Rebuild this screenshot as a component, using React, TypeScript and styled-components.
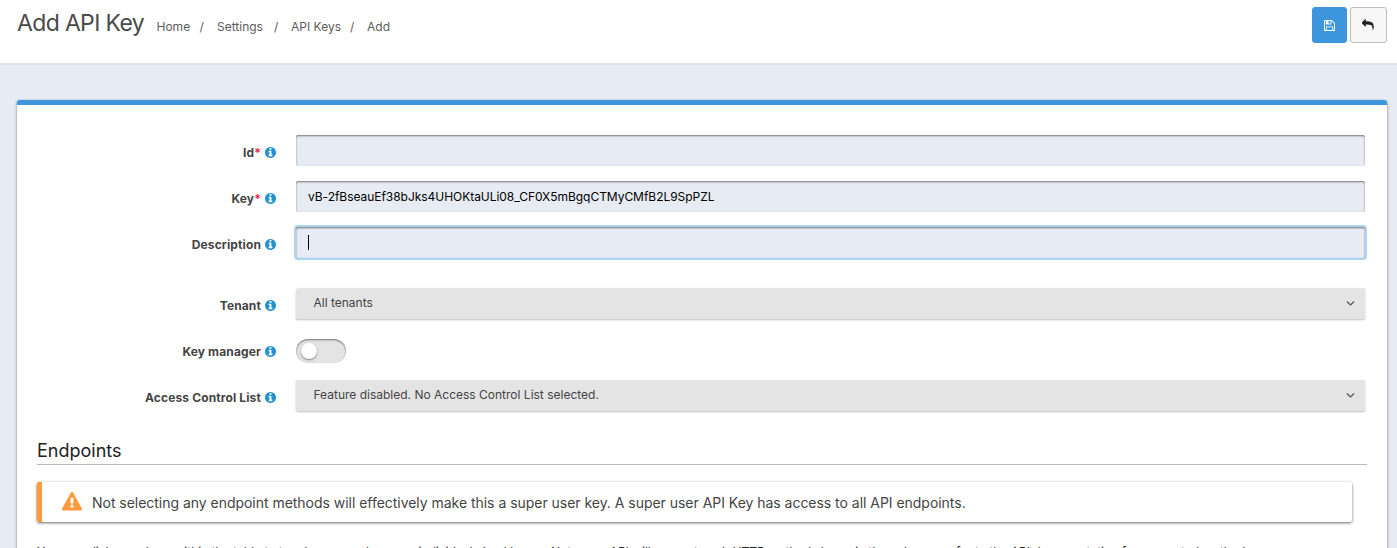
import React from "react";
import styled, { createGlobalStyle } from "styled-components";

const Global = createGlobalStyle`
  * { box-sizing: border-box; }
  html, body { margin: 0; height: 548px; overflow: hidden; background: #e7ebf3; }
  body { font-family: Inter, "Liberation Sans", sans-serif; color: #444; font-size: 12px; }
`;

const Page = styled.div`
  height: 548px;
  overflow: hidden;
`;

const Header = styled.header`
  display: flex;
  align-items: flex-start;
  height: 63px;
  padding: 7px 10px 0 17px;
  background: #fff;
  box-shadow: 0 1px 1px 1px #e1e3e6;
`;

const Title = styled.h1`
  margin: 0;
  width: 139.5px;
  font-size: 23px;
  font-weight: 400;
  line-height: 32px;
  letter-spacing: -0.65px;
  white-space: nowrap;
  color: #4a4a4a;
`;

const Crumbs = styled.nav`
  display: flex;
  flex: 1;
  padding-top: 10px;
  line-height: 20px;
  color: #5c5c5c;
`;

const Crumb = styled.span<{ $w: number }>`
  width: ${(p) => p.$w}px;
  white-space: nowrap;
`;

const IconButton = styled.button<{ $primary?: boolean }>`
  display: flex;
  align-items: center;
  justify-content: center;
  width: ${(p) => (p.$primary ? 35 : 37)}px;
  height: 36px;
  margin-left: 3px;
  padding: 0 1px 0 0;
  border-radius: 3px;
  border: 1px solid ${(p) => (p.$primary ? "#3d96dd" : "#bdbdbd")};
  background: ${(p) => (p.$primary ? "#3d96dd" : "#f7f7f7")};
  color: ${(p) => (p.$primary ? "#fff" : "#222")};
`;

const Panel = styled.main`
  margin: 37px 10px 0 17px;
  height: 470px;
  padding: 30px 20px 0;
  background: #fff;
  border-top: 5px solid #3d96dd;
  border-radius: 3px 3px 0 0;
  box-shadow: 0 1px 3px rgba(0, 0, 0, 0.5);
`;

const Row = styled.div<{ $gap?: number }>`
  display: flex;
  height: 31px;
  margin-bottom: ${(p) => p.$gap ?? 15}px;
  padding-right: 2px;
`;

const Label = styled.label`
  display: flex;
  justify-content: flex-end;
  align-items: center;
  width: 239px;
  margin-right: 20px;
  padding-top: 3px;
  font-weight: 700;
  letter-spacing: 0.13px;
  white-space: nowrap;
  svg { margin-left: 4px; color: #2490d0; }
`;

const Star = styled.span`
  color: #f0254c;
`;

const Input = styled.div<{ $focus?: boolean }>`
  display: flex;
  align-items: center;
  flex: 1;
  height: 31px;
  padding: 0 12px;
  color: #000;
  letter-spacing: -0.04px;
  background: #e7ebf3;
  border-radius: 2px;
  box-shadow: inset 0 1px 2px rgba(0, 0, 0, 0.5)${(p) => (p.$focus ? ", 0 0 0 2px #acd4f1" : "")};
`;

const Caret = styled.span`
  width: 1px;
  height: 15px;
  background: #000;
`;

const Select = styled.div`
  display: flex;
  justify-content: space-between;
  align-items: center;
  flex: 1;
  height: 31px;
  padding: 0 10px 2px 17.5px;
  background: #e4e4e4;
  border-radius: 2px;
  box-shadow: 0 1px 2px rgba(0, 0, 0, 0.25);
  svg { margin-top: 2px; }
`;

const Toggle = styled.div`
  display: flex;
  align-items: center;
  width: 50px;
  height: 24px;
  margin-top: 5px;
  padding-left: 5px;
  border-radius: 12px;
  background: #e4e4e4;
  box-shadow: inset 0 1px 2px rgba(0, 0, 0, 0.5);
`;

const Knob = styled.span`
  width: 16px;
  height: 16px;
  border-radius: 50%;
  background: #fff;
  box-shadow: 0 1px 2px rgba(0, 0, 0, 0.45);
`;

const Section = styled.h2`
  margin: 26px 0 17px;
  height: 28px;
  border-bottom: 1px solid #b9b9b9;
  font-size: 18px;
  font-weight: 400;
  line-height: 28px;
  color: #222;
`;

const Alert = styled.div`
  display: flex;
  align-items: center;
  height: 40px;
  margin-right: 15px;
  padding-left: 20px;
  border-left: 5px solid #ff9a3c;
  border-radius: 2px;
  box-shadow: 0 1px 3px rgba(0, 0, 0, 0.6);
  font-size: 14px;
  letter-spacing: -0.03px;
  color: #444;
  svg { color: #ff9a3c; margin-right: 10px; }
`;

const Note = styled.p`
  margin: 20px 0 0;
  line-height: 20px;
  white-space: nowrap;
  color: #222;
`;

const Info = () => (
  <svg width="11" height="11" viewBox="128 128 1536 1536" fill="currentColor">
    <path d="M1152 1376v-160q0-14-9-23t-23-9h-96v-512q0-14-9-23t-23-9h-320q-14 0-23 9t-9 23v160q0 14 9 23t23 9h96v320h-96q-14 0-23 9t-9 23v160q0 14 9 23t23 9h448q14 0 23-9t9-23zm-128-896v-192q0-14-9-23t-23-9h-192q-14 0-23 9t-9 23v192q0 14 9 23t23 9h192q14 0 23-9t9-23zm640 416q0 209-103 385.5t-279.5 279.5-385.5 103-385.5-103-279.5-279.5-103-385.5 103-385.5 279.5-279.5 385.5-103 385.5 103 279.5 279.5 103 385.5z" />
  </svg>
);

const Save = () => (
  <svg width="11" height="11" viewBox="128 128 1536 1536" fill="currentColor">
    <path d="M512 1536h768v-384h-768v384zm896 0h128v-896q0-14-10-38.5t-20-34.5l-281-281q-10-10-34-20t-39-10v416q0 40-28 68t-68 28h-576q-40 0-68-28t-28-68v-416h-128v1280h128v-416q0-40 28-68t68-28h832q40 0 68 28t28 68v416zm-384-928v-320q0-13-9.5-22.5t-22.5-9.5h-192q-13 0-22.5 9.5t-9.5 22.5v320q0 13 9.5 22.5t22.5 9.5h192q13 0 22.5-9.5t9.5-22.5zm640 32v928q0 40-28 68t-68 28h-1344q-40 0-68-28t-28-68v-1344q0-40 28-68t68-28h928q40 0 88 20t76 48l280 280q28 28 48 76t20 88z" />
  </svg>
);

const Reply = () => (
  <svg width="12" height="12" viewBox="0 0 1792 1792" fill="currentColor">
    <path d="M1792 1120q0 166-127 451-3 7-10.5 24t-13.5 30-13 22q-12 17-28 17-15 0-23.5-10t-8.5-25q0-9 2.5-26.5t2.5-23.5q5-68 5-123 0-112-19.5-200.5t-54-153.5-90-113-118.5-78-149-47-170-24-192-7h-224v256q0 26-19 45t-45 19-45-19l-512-512q-19-19-19-45t19-45l512-512q19-19 45-19t45 19 19 45v256h224q713 0 875 403 53 134 53 333z" />
  </svg>
);

const Warning = () => (
  <svg width="20" height="20" viewBox="0 0 1792 1792" fill="currentColor">
    <path d="M1024 1375v-190q0-14-9.5-23.5t-22.5-9.5h-192q-13 0-22.5 9.5t-9.5 23.5v190q0 14 9.5 23.5t22.5 9.5h192q13 0 22.5-9.5t9.5-23.5zm-2-374l18-459q0-12-10-19-13-11-24-11h-220q-11 0-24 11-10 7-10 21l17 457q0 10 10 16.5t24 6.5h185q14 0 23.5-6.5t10.5-16.5zm-14-934l768 1408q35 63-2 126-17 29-46.5 46t-63.5 17h-1536q-34 0-63.5-17t-46.5-46q-37-63-2-126l768-1408q17-31 47-49t65-18 65 18 47 49z" />
  </svg>
);

const Chevron = () => (
  <svg width="9" height="7" viewBox="0 0 9 7" fill="none" stroke="#555" strokeWidth="1.2">
    <path d="M0.9 1.5L4.5 5L8.1 1.5" />
  </svg>
);

export default function App() {
  return (
    <Page>
      <Global />
      <Header>
        <Title>Add API Key</Title>
        <Crumbs>
          <Crumb $w={43}>Home</Crumb><Crumb $w={17.5}>/</Crumb>
          <Crumb $w={57}>Settings</Crumb><Crumb $w={17}>/</Crumb>
          <Crumb $w={59}>API Keys</Crumb><Crumb $w={17}>/</Crumb>
          <Crumb $w={30}>Add</Crumb>
        </Crumbs>
        <IconButton $primary aria-label="Save"><Save /></IconButton>
        <IconButton aria-label="Back"><Reply /></IconButton>
      </Header>
      <Panel>
        <Row><Label>Id<Star>*</Star><Info /></Label><Input /></Row>
        <Row><Label>Key<Star>*</Star><Info /></Label><Input>vB-2fBseauEf38bJks4UHOKtaULi08_CF0X5mBgqCTMyCMfB2L9SpPZL</Input></Row>
        <Row $gap={30}><Label>Description<Info /></Label><Input $focus><Caret /></Input></Row>
        <Row><Label>Tenant<Info /></Label><Select>All tenants<Chevron /></Select></Row>
        <Row><Label>Key manager<Info /></Label><Toggle><Knob /></Toggle></Row>
        <Row><Label>Access Control List<Info /></Label><Select>Feature disabled. No Access Control List selected.<Chevron /></Select></Row>
        <Section>Endpoints</Section>
        <Alert><Warning />Not selecting any endpoint methods will effectively make this a super user key. A super user API Key has access to all API endpoints.</Alert>
        <Note>You can click anywhere within the table to toggle rows, columns or individual checkboxes. Not every API will support each HTTP method shown in the columns, refer to the API documentation for supported methods.</Note>
      </Panel>
    </Page>
  );
}
